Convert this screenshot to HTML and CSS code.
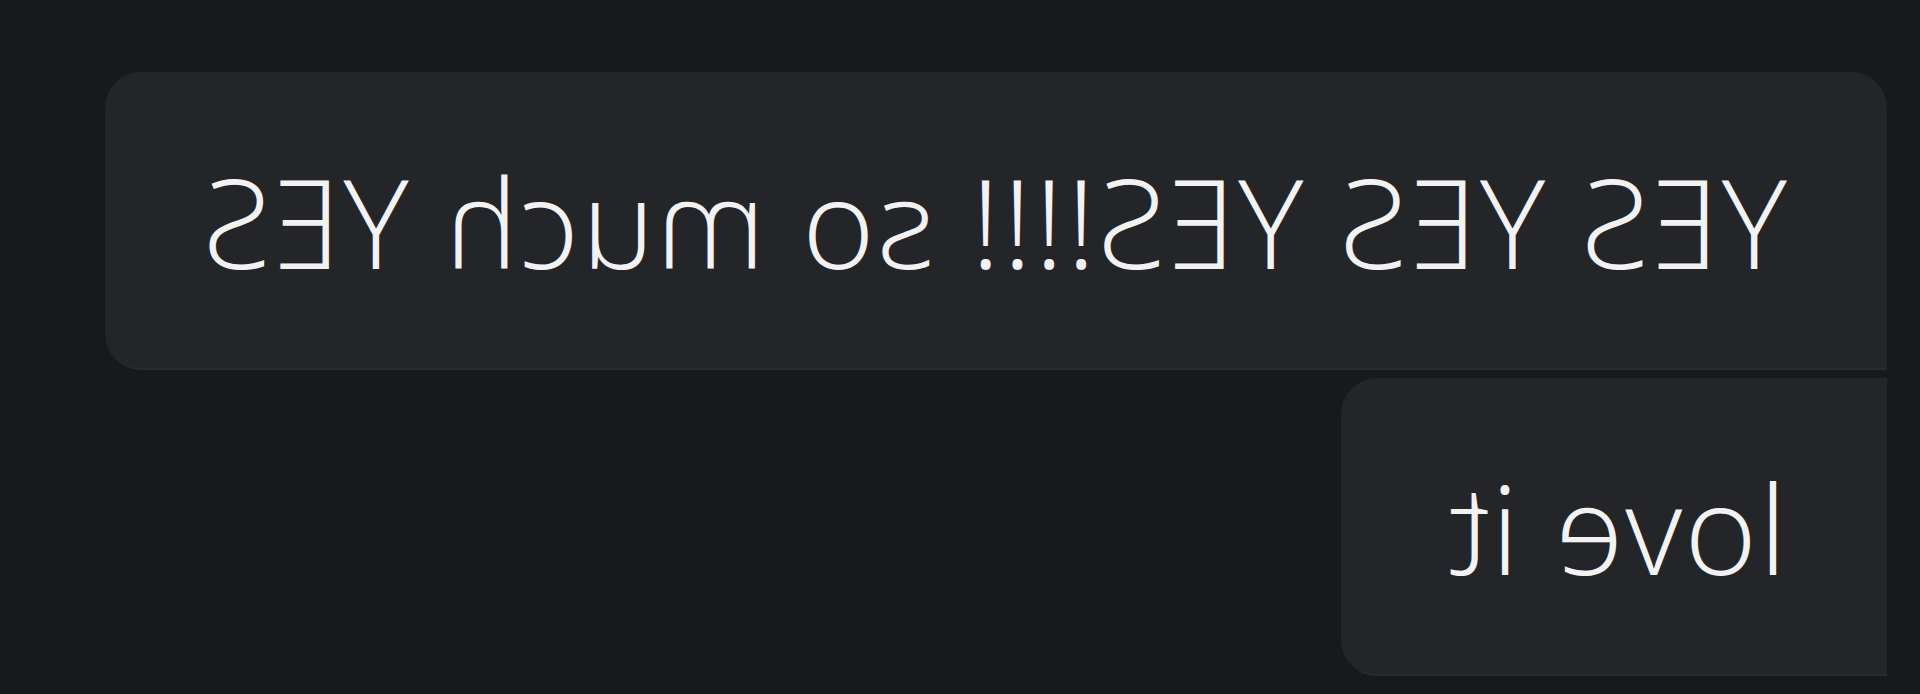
FILE: index.html
```html
<!DOCTYPE html>
<html lang="en">
<head>
  <meta charset="UTF-8">
  <meta name="viewport" content="width=device-width, initial-scale=1">
  <title>chat</title>
  <link rel="stylesheet" href="styles.css">
</head>
<body>
  <div class="chat">
    <div class="bubble first">YES YES YES!!!! so much YES</div>
    <div class="bubble last">love it</div>
  </div>
</body>
</html>
```

FILE: styles.css
```css
/* whole page */
html, body {
  margin: 0;
  padding: 0;
  background: #18191c;
  overflow: hidden;
}
/* the screenshot is mirrored, so flip the chat */
.chat {
  transform: scaleX(-1);
  display: flex;
  flex-direction: column;
  align-items: flex-start;
  gap: 8px;
  padding: 72px 0 0 33px;
  height: 694px;
  box-sizing: border-box;
}
.bubble {
  background: #242529;
  color: #f2f2f3;
  font-family: "Open Sans", "Noto Sans", sans-serif;
  font-weight: 350;
  font-size: 124px;
  letter-spacing: 2px;
  line-height: 168px;
  padding: 65px 100px;
  white-space: nowrap;
  box-shadow: inset 0 -12px 0 -10px #2a2b2f;
}
.first {
  border-radius: 36px 36px 36px 0;
  padding-right: 96px;
}
.last {
  border-radius: 0 36px 36px 0;
  padding-right: 104px;
}
```
